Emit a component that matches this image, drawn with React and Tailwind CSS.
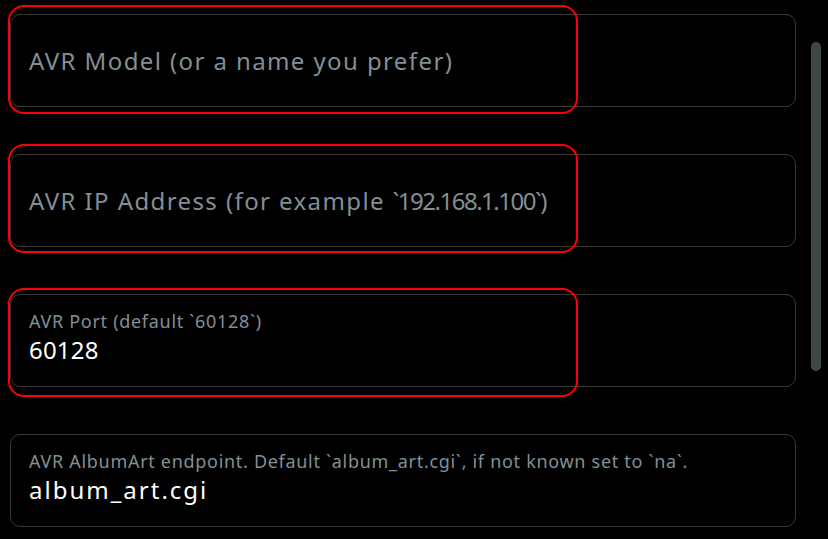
import React from 'react';

const font = { fontFamily: '"Noto Sans", "Open Sans", sans-serif' };

function Field({ label, value, placeholder, mark, valueTrack = 'tracking-[1.2px]' }) {
  return (
    <div className="relative h-[93px] rounded-[10px] border border-[#3a3a3a] px-[18px]">
      {mark && (
        <div
          className={`pointer-events-none absolute left-[-3px] w-[570px] h-[109px] rounded-[16px] border-2 border-[#ff0000] ${mark}`}
        />
      )}
      {placeholder ? (
        <div className="flex h-full items-center pt-[1px] text-[24px] tracking-[1.4px] text-[#818f97]">
          <span>{placeholder}</span>
        </div>
      ) : (
        <div className="flex flex-col pt-[13px]">
          <span className="text-[18px] leading-[26px] tracking-[0.7px] text-[#818f97]">{label}</span>
          <span className={`text-[24px] leading-[32px] text-white ${valueTrack}`}>{value}</span>
        </div>
      )}
    </div>
  );
}

export default function App() {
  return (
    <div className="flex h-[539px] w-[828px] overflow-hidden bg-black" style={font}>
      <div className="ml-[10px] flex w-[786px] flex-col gap-[47px] pt-[14px]">
        <Field placeholder="AVR Model (or a name you prefer)" mark="top-[-10px]" />
        <Field
          placeholder={
            <>
              AVR IP Address (for example <span className="tracking-[-1.5px]">`192.168.1.100`)</span>
            </>
          }
          mark="top-[-11px]"
        />
        <Field
          label="AVR Port (default `60128`)"
          value="60128"
          valueTrack="tracking-[0.2px]"
          mark="top-[-7px]"
        />
        <Field
          label="AVR AlbumArt endpoint. Default `album_art.cgi`, if not known set to `na`."
          value="album_art.cgi"
          valueTrack="tracking-[2px]"
        />
      </div>
      <div className="ml-[15px] pt-[42px]">
        <div className="h-[329px] w-[10px] rounded-full bg-[#3f4846]" />
      </div>
    </div>
  );
}
